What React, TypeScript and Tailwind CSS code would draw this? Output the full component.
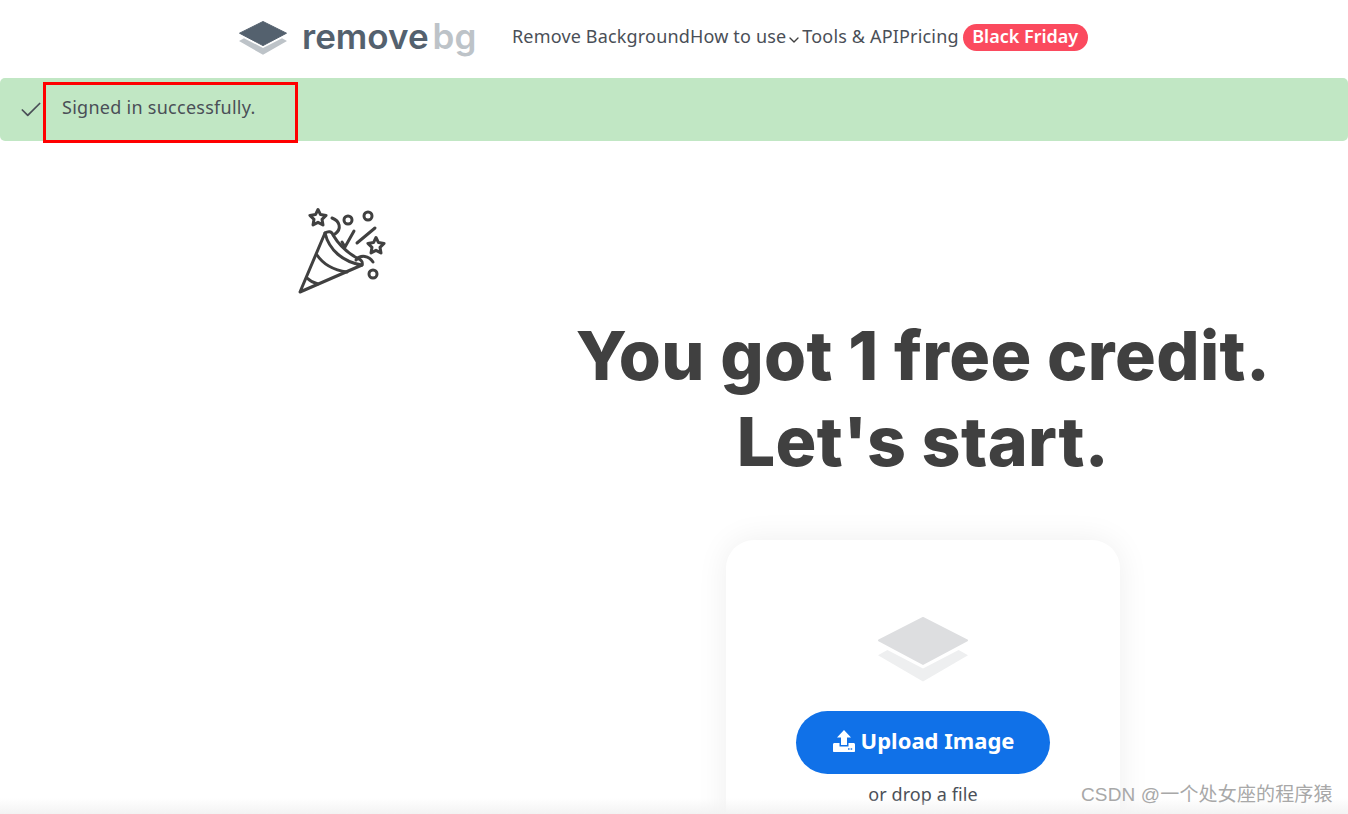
import React from 'react';
import { Check, ChevronDown } from 'lucide-react';

const LayersLogo = ({ top, bottom, className }: { top: string; bottom: string; className: string }) => (
  <svg viewBox="0 0 48 34" preserveAspectRatio="none" className={className}>
    <path d="M24 0.5 47.5 12.2 24 24.6 0.5 12.2Z" fill={top} stroke={top} strokeLinejoin="round" />
    <path d="M5 17.2 24 27 43 17.2 48 20 24 33.8 0 20Z" fill={bottom} />
  </svg>
);

const Star = ({ cx, cy, r }: { cx: number; cy: number; r: number }) => {
  const points = Array.from({ length: 10 }, (_, i) => {
    const radius = i % 2 === 0 ? r : r * 0.5;
    const angle = (Math.PI / 5) * i - Math.PI / 2;
    return `${(cx + radius * Math.cos(angle)).toFixed(1)},${(cy + radius * Math.sin(angle)).toFixed(1)}`;
  }).join(' ');
  return <polygon points={points} />;
};

const PartyPopper = () => (
  <svg viewBox="0 0 110 105" className="w-[110px] h-[105px]" fill="none" stroke="#404040" strokeWidth="3" strokeLinecap="round" strokeLinejoin="round">
    <path d="M15 92 40 33C44 50 58 62 77 65Z" />
    <path d="M40 33C43 31 47 31 48 35 54 45 63 53 72 58 77 60 78 62 77 65" />
    <path d="M32 55C38 64 48 70 62 72" />
    <path d="M22 78C25 81 29 83 33 84" />
    <Star cx={33} cy={18} r={8.5} />
    <Star cx={91} cy={46} r={8.5} />
    <circle cx={63} cy={20} r={4} />
    <circle cx={83} cy={16} r={4} />
    <circle cx={88} cy={74} r={4} />
    <path d="M90 28 72 43" />
    <path d="M69 31 60 47 57 42" />
    <path d="M47 18C55 21 57 29 50 34" />
    <path d="M71 60C76 54 84 56 88 62" />
  </svg>
);

const UploadIcon = () => (
  <svg viewBox="0 0 24 24" className="w-6 h-6" fill="white">
    <path d="M12 1 19 8.5H15V16H9V8.5H5Z" />
    <path d="M1 15.5C1 14.7 1.6 14 2.4 14H7.5V17.5H16.5V14H21.6C22.4 14 23 14.7 23 15.5V22C23 22.6 22.6 23 22 23H2C1.4 23 1 22.6 1 22Z" />
    <rect x="16" y="19.3" width="1.6" height="1.4" fill="#1071e8" />
    <rect x="18.6" y="19.3" width="1.6" height="1.4" fill="#1071e8" />
  </svg>
);

const NavLink = ({ children }: { children: React.ReactNode }) => (
  <a className="-mt-[3px] text-[18px] leading-7 tracking-[0.17px] text-[#4a4f57] whitespace-nowrap">{children}</a>
);

export default function App() {
  return (
    <div className="relative h-[814px] w-full overflow-hidden bg-white font-['Noto_Sans','Open_Sans',sans-serif]">
      {/* Header */}
      <header className="h-[78px] flex items-center pl-[239px] pb-1">
        <div className="flex items-center w-[273px]">
          <LayersLogo top="#54616e" bottom="#bdc3c8" className="w-12 h-[34px] mt-0.5" />
          <span className="ml-[15px] -mt-[2px] text-[35px] leading-none font-semibold text-[#54616e] font-['Inter',sans-serif]">
            remove<span className="ml-[4px] text-[#bdc3c8]">bg</span>
          </span>
        </div>
        <nav className="flex items-center">
          <NavLink>Remove Background</NavLink>
          <NavLink>How to use</NavLink>
          <ChevronDown size={16} strokeWidth={2} className="mt-1.5 text-[#404040]" />
          <NavLink>Tools &amp; API</NavLink>
          <NavLink>Pricing</NavLink>
          <span className="ml-1 h-[27px] w-[125px] pb-[2px] rounded-full bg-[#fb4a5e] flex items-center justify-center text-[18px] font-semibold text-white">
            Black Friday
          </span>
        </nav>
      </header>

      {/* Flash message */}
      <div className="h-[63px] rounded-[5px] bg-[#c1e7c4] flex items-center pl-[18px] pb-[5px] text-[#4a4f57]">
        <Check size={26} strokeWidth={1.6} className="mt-[5px]" />
        <span className="ml-[18px] text-[18px] tracking-[0.27px]">Signed in successfully.</span>
      </div>

      {/* Main */}
      <main className="flex">
        <div className="w-[498px] shrink-0 pt-[59px] pl-[285px]">
          <PartyPopper />
        </div>
        <div className="flex-1 flex flex-col items-center pt-[171px]">
          <h1 className="text-center text-[68px] leading-[86px] font-extrabold tracking-[0.4px] text-[#404040] font-['Inter',sans-serif] whitespace-nowrap">
            You got 1 free credit.
            <br />
            Let's start.
          </h1>
          <div className="mt-[56px] w-[394px] h-[400px] rounded-[28px] bg-white shadow-[0_0_32px_rgba(0,0,0,0.07)] flex flex-col items-center pt-[77px]">
            <LayersLogo top="#dddee0" bottom="#eeeff0" className="w-[90px] h-[65px]" />
            <button className="mt-[29px] w-[254px] h-[63px] pb-1 rounded-full bg-[#1071e8] flex items-center justify-center gap-[5px] text-[22px] font-bold text-white">
              <UploadIcon />
              Upload Image
            </button>
            <p className="mt-[6px] text-[18px] leading-7 tracking-[0.1px] text-[#4a4f57]">or drop a file</p>
          </div>
        </div>
      </main>

      {/* Bottom fade */}
      <div className="absolute inset-x-0 bottom-0 h-4 bg-gradient-to-t from-[#f3f3f3] to-transparent" />

      {/* Annotation box */}
      <div className="absolute left-[43px] top-[82px] w-[255px] h-[61px] border-[3px] border-[#ff0000]" />

      {/* Watermark */}
      <span className="absolute left-[1081px] top-[783px] text-[19px] leading-6 tracking-[0.15px] text-[#a8a8a8] whitespace-nowrap font-['Liberation_Sans','Noto_Sans_CJK_SC',sans-serif]">
        CSDN @一个处女座的程序猿
      </span>
    </div>
  );
}
